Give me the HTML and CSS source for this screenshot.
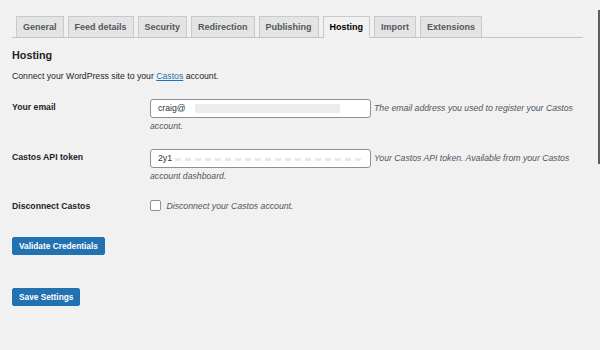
FILE: index.html
```html
<!DOCTYPE html>
<html lang="en">
<head>
    <meta charset="UTF-8">
    <meta name="viewport" content="width=device-width, initial-scale=1.0">
    <title>Hosting settings</title>
    <link rel="stylesheet" href="styles.css">
</head>
<body>

    <!-- Borde de la ventana a la derecha -->
    <div class="edge"></div>

    <div class="wrap">
        <!-- Pestañas de ajustes -->
        <nav class="tabs">
            <a class="tab">General</a>
            <a class="tab">Feed details</a>
            <a class="tab">Security</a>
            <a class="tab">Redirection</a>
            <a class="tab">Publishing</a>
            <a class="tab active">Hosting</a>
            <a class="tab">Import</a>
            <a class="tab">Extensions</a>
        </nav>

        <h2 class="title">Hosting</h2>
        <p class="intro">Connect your WordPress site to your <a href="#" class="link">Castos</a> account.</p>

        <!-- Filas del formulario -->
        <div class="form">
            <div class="row">
                <label class="label">Your email</label>
                <div class="field">
                    <div class="line">
                        <span class="input input-email">craig@</span>
                        <span class="desc">The email address you used to register your Castos</span>
                    </div>
                    <div class="desc">account.</div>
                </div>
            </div>

            <div class="row">
                <label class="label">Castos API token</label>
                <div class="field">
                    <div class="line">
                        <span class="input input-token">2y1</span>
                        <span class="desc">Your Castos API token. Available from your Castos</span>
                    </div>
                    <div class="desc">account dashboard.</div>
                </div>
            </div>

            <div class="row row-check">
                <label class="label">Disconnect Castos</label>
                <div class="field">
                    <span class="checkbox"></span>
                    <span class="desc">Disconnect your Castos account.</span>
                </div>
            </div>
        </div>

        <button class="button validate">Validate Credentials</button>
        <button class="button save">Save Settings</button>
    </div>

</body>
</html>
```

FILE: styles.css
```css
/* Estilos generales */
body {
    margin: 0;
    background: #f1f1f1;
    font-family: "Liberation Sans", Arial, sans-serif;
    font-size: 8.7px;
    color: #1d2327;
}

.edge {
    position: absolute;
    top: 10px;
    left: 598px;
    width: 2px;
    height: 154px;
    background: #5e5e5e;
}

.wrap {
    width: 571px;
    padding: 16px 0 0 12px;
}

/* Pestañas */
.tabs {
    display: flex;
    gap: 4px;
    padding-left: 4px;
    border-bottom: 1px solid #c3c4c7;
    height: 21px;
}

.tab {
    box-sizing: border-box;
    height: 21px;
    padding: 0 6px;
    line-height: 20px;
    background: #e4e4e4;
    border: 1px solid #c9c9c9;
    border-bottom: none;
    font-size: 9px;
    font-weight: 700;
    color: #50575e;
}

.tab.active {
    background: #f1f1f1;
    color: #000;
    height: 22px;
}

.title {
    margin: 10px 0 0;
    font-size: 10.8px;
    font-weight: 700;
    line-height: 14px;
}

.intro {
    margin: 8px 0 0;
    line-height: 12px;
}

.link {
    color: #2271b1;
}

/* Formulario */
.form {
    margin-top: 17px;
}

.row {
    display: grid;
    grid-template-columns: 138px 433px;
    height: 50px;
}

.row-check {
    height: 38px;
}

.label {
    font-weight: 700;
    padding-top: 2px;
    line-height: 12px;
}

.row-check .label {
    padding-top: 1px;
}

.field {
    line-height: 17px;
}

.line {
    display: flex;
    align-items: center;
    gap: 3px;
    height: 19px;
}

.row-check .field {
    line-height: 14px;
}

.input {
    box-sizing: border-box;
    width: 221px;
    height: 19px;
    padding: 0 7px;
    line-height: 17px;
    background-color: #fff;
    border: 1px solid #8c8f94;
    border-radius: 3px;
    white-space: nowrap;
    overflow: hidden;
    color: #2c3338;
}

/* Texto difuminado dentro de los campos */
.input-email {
    background-image: linear-gradient(#ececec, #ececec);
    background-repeat: no-repeat;
    background-position: 44px 4px;
    background-size: 145px 9px;
}

.input-token {
    background-image: repeating-linear-gradient(90deg, #e9e9e9 0 6px, transparent 6px 10px);
    background-repeat: no-repeat;
    background-position: 24px 8px;
    background-size: 188px 3px;
}

.desc {
    font-style: italic;
    color: #50575e;
}

.checkbox {
    display: inline-block;
    width: 9px;
    height: 9px;
    margin: 0 3px 0 0;
    vertical-align: -2px;
    background: #fff;
    border: 1px solid #8c8f94;
    border-radius: 2px;
}

/* Botones */
.button {
    display: block;
    height: 18px;
    padding: 0 6px;
    background: #2271b1;
    border: 1px solid #2271b1;
    border-radius: 2px;
    color: #fff;
    font-family: inherit;
    font-size: 8.3px;
    font-weight: 700;
}

.save {
    margin-top: 33px;
}
```
